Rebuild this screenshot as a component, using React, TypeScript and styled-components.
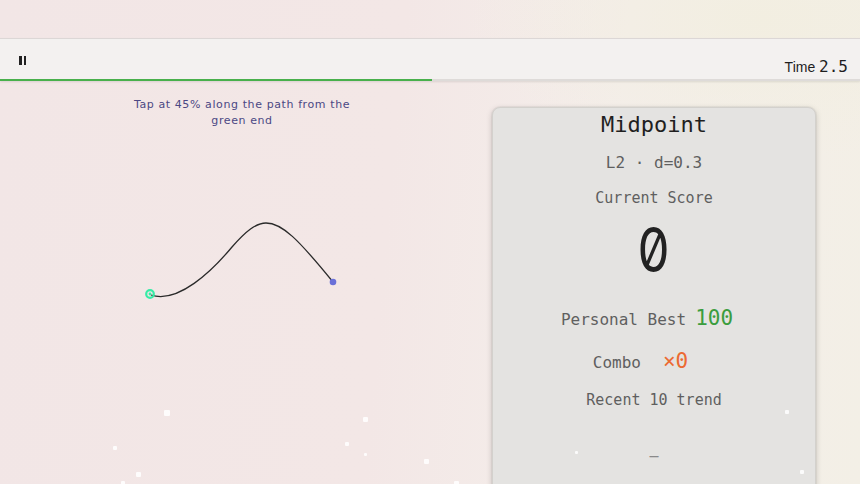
import React from 'react';
import styled, { createGlobalStyle } from 'styled-components';

const GlobalStyle = createGlobalStyle`
  html, body {
    margin: 0;
    padding: 0;
    height: 100%;
    overflow: hidden;
  }
  body {
    font-family: "DejaVu Sans Mono", monospace;
    background: #f3e9e7;
  }
`;

const Screen = styled.div`
  position: relative;
  width: 860px;
  height: 484px;
  overflow: hidden;
  background:
    radial-gradient(ellipse 420px 200px at 760px 20px, rgba(242, 238, 224, 0.9), rgba(242, 238, 224, 0) 70%),
    linear-gradient(95deg, #f2e6e6 0%, #f3e7e6 45%, #f4eeea 70%, #f3efe6 100%);
  display: flex;
  flex-direction: column;
`;

const Spacer = styled.div`
  height: 38px;
  flex: none;
`;

const TopBar = styled.div`
  position: relative;
  height: 40px;
  flex: none;
  display: flex;
  align-items: center;
  justify-content: space-between;
  padding: 0 12px 0 19px;
  background: #f3f1f0;
  border-top: 1px solid #dcd7d6;
  border-bottom: 2px solid #dedbd9;
  box-shadow: 0 1px 2px rgba(0, 0, 0, 0.1);
`;

const Progress = styled.div`
  position: absolute;
  left: 0;
  bottom: -2px;
  height: 2px;
  background: #48b04c;
`;

const PauseButton = styled.button`
  display: flex;
  gap: 2px;
  padding: 0;
  margin-top: 2px;
  border: none;
  background: none;
  cursor: pointer;
`;

const PauseBar = styled.span`
  width: 2.5px;
  height: 9px;
  background: #222;
`;

const Timer = styled.div`
  font-family: "Liberation Sans", sans-serif;
  font-size: 14px;
  color: #1e1e1e;
  margin-top: 14px;
  span {
    font-family: "DejaVu Sans Mono", monospace;
    font-size: 16px;
  }
`;

const Main = styled.div`
  flex: 1;
  display: grid;
  grid-template-columns: 484px 324px;
  gap: 8px;
  padding-top: 26px;
  min-height: 0;
`;

const PlayArea = styled.div`
  display: flex;
  flex-direction: column;
  align-items: center;
  margin-top: -10px;
`;

const Hint = styled.div`
  width: 232px;
  text-align: center;
  font-family: "DejaVu Sans", sans-serif;
  font-size: 11px;
  font-weight: 500;
  line-height: 16px;
  letter-spacing: 0.6px;
  color: #4b4884;
`;

const Curve = styled.svg`
  display: block;
  margin-top: 2px;
`;

const Panel = styled.div`
  height: 400px;
  box-sizing: border-box;
  padding-top: 4px;
  display: flex;
  flex-direction: column;
  align-items: center;
  background: #e4e3e1;
  border: 1px solid #d3d1cd;
  border-radius: 8px;
  box-shadow: 0 0 0 1px rgba(0, 0, 0, 0.04), 0 2px 6px rgba(0, 0, 0, 0.18);
  color: #5e5e5e;
`;

const Title = styled.div`
  font-size: 22px;
  line-height: 26px;
  color: #1f1f1f;
`;

const Meta = styled.div<{ $top: number; $size?: number }>`
  margin-top: ${p => p.$top}px;
  font-size: ${p => p.$size ?? 16}px;
  line-height: 20px;
  color: #5f5f5f;
`;

const Score = styled.div`
  margin-top: 10px;
  font-family: Inter, "DejaVu Sans Mono", monospace;
  font-feature-settings: "zero" 1;
  font-variant-numeric: slashed-zero;
  font-size: 62px;
  line-height: 64px;
  color: #222;
  transform: scaleX(0.82);
`;

const StatRow = styled.div<{ $top: number; $gap: number; $shift: number }>`
  margin-top: ${p => p.$top}px;
  margin-right: ${p => p.$shift}px;
  display: flex;
  align-items: baseline;
  gap: ${p => p.$gap}px;
  line-height: 28px;
  font-size: 16px;
  color: #5f5f5f;
`;

const StatValue = styled.span<{ $color: string }>`
  font-size: 21px;
  color: ${p => p.$color};
`;

const Trend = styled.div`
  margin-top: 36px;
  font-size: 15px;
  line-height: 20px;
  color: #8a8a8a;
`;

const Speck = styled.span<{ $x: number; $y: number; $s: number }>`
  position: absolute;
  left: ${p => p.$x}px;
  top: ${p => p.$y}px;
  width: ${p => p.$s}px;
  height: ${p => p.$s}px;
  border-radius: 1px;
  background: rgba(255, 255, 255, 0.85);
  pointer-events: none;
`;

const specks = [
  { x: 164, y: 410, s: 6 },
  { x: 113, y: 446, s: 4 },
  { x: 136, y: 472, s: 5 },
  { x: 121, y: 481, s: 4 },
  { x: 363, y: 417, s: 5 },
  { x: 345, y: 442, s: 4 },
  { x: 364, y: 453, s: 3 },
  { x: 424, y: 459, s: 5 },
  { x: 454, y: 481, s: 5 },
  { x: 785, y: 410, s: 4 },
  { x: 800, y: 470, s: 4 },
  { x: 575, y: 451, s: 3 },
];

export default function App() {
  const progress = 432;

  return (
    <>
      <GlobalStyle />
      <Screen>
        <Spacer />
        <TopBar>
          <PauseButton aria-label="Pause">
            <PauseBar />
            <PauseBar />
          </PauseButton>
          <Timer>
            Time <span>2.5</span>
          </Timer>
          <Progress style={{ width: progress }} />
        </TopBar>
        <Main>
          <PlayArea>
            <Hint>Tap at 45% along the path from the green end</Hint>
            <Curve width="484" height="220" viewBox="0 130 484 220">
              <path
                d="M151 294 C 178 303, 212 270, 232 246 C 246 230, 256 222, 266 222 C 282 222, 298 238, 333 281"
                fill="none"
                stroke="#2a2a2a"
                strokeWidth="1.3"
              />
              <circle cx="150" cy="293" r="3.8" fill="none" stroke="#36eca6" strokeWidth="2.2" />
              <circle cx="150" cy="293" r="1.4" fill="#36eca6" />
              <circle cx="333" cy="281" r="3.3" fill="#6a70d8" />
            </Curve>
          </PlayArea>
          <Panel>
            <Title>Midpoint</Title>
            <Meta $top={15}>L2 · d=0.3</Meta>
            <Meta $top={15} $size={15}>Current Score</Meta>
            <Score>0</Score>
            <StatRow $top={22} $gap={9} $shift={14}>
              Personal Best <StatValue $color="#3b9d3e">100</StatValue>
            </StatRow>
            <StatRow $top={13} $gap={22} $shift={27}>
              Combo <StatValue $color="#ec6a32">×0</StatValue>
            </StatRow>
            <Meta $top={13} $size={15}>Recent 10 trend</Meta>
            <Trend>–</Trend>
          </Panel>
        </Main>
        {specks.map((s, i) => (
          <Speck key={i} $x={s.x} $y={s.y} $s={s.s} />
        ))}
      </Screen>
    </>
  );
}
